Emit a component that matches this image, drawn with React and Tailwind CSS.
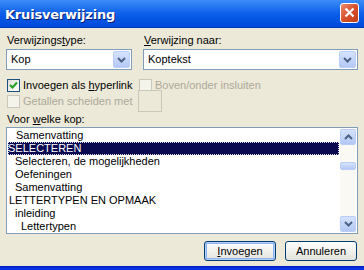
import React from "react";

const Chevron = ({ up }) => (
  <svg width="9" height="6" viewBox="0 0 9 6" className={up ? "rotate-180" : ""}>
    <path d="M1 1 L4.5 4.5 L8 1" fill="none" stroke="#4D6185" strokeWidth="2" />
  </svg>
);

const DropButton = () => (
  <div className="flex h-[17px] w-[17px] items-center justify-center rounded-[2px] border border-[#B9CDF6] bg-gradient-to-b from-[#D6E3FE] to-[#B4C8F5]">
    <Chevron />
  </div>
);

const Combo = ({ value, className }) => (
  <div className={"flex h-[21px] items-center justify-between border border-[#7F9DB9] bg-white pl-[4px] pr-[1px] " + className}>
    <span>{value}</span>
    <DropButton />
  </div>
);

const Check = ({ checked, disabled }) => (
  <div
    className={
      "flex h-[13px] w-[13px] shrink-0 items-center justify-center border " +
      (disabled ? "border-[#CAC8BB] bg-[#F5F4EA]" : "border-[#1C5180] bg-gradient-to-br from-[#DCDCD7] to-white")
    }
  >
    {checked && (
      <svg width="9" height="9" viewBox="0 0 9 9">
        <path d="M1 4 L3.5 6.5 L8 1.5" fill="none" stroke="#21A121" strokeWidth="2" />
      </svg>
    )}
  </div>
);

const Button = ({ children, focused }) => (
  <div
    className={
      "flex h-[20px] w-[72px] items-center justify-center rounded-[3px] border border-[#003C74] bg-gradient-to-b from-white to-[#E3E3DB] " +
      (focused ? "shadow-[inset_0_0_0_1px_#B5CDF5,inset_0_0_0_2px_#8CB4F2]" : "")
    }
  >
    {children}
  </div>
);

const items = [
  { text: "Samenvatting", pl: "pl-[8px]" },
  { text: "SELECTEREN", pl: "pl-[0px]", sel: true },
  { text: "Selecteren, de mogelijkheden", pl: "pl-[7px]" },
  { text: "Oefeningen", pl: "pl-[7px]" },
  { text: "Samenvatting", pl: "pl-[7px]" },
  { text: "LETTERTYPEN EN OPMAAK", pl: "pl-[1px]" },
  { text: "inleiding", pl: "pl-[7px]" },
  { text: "Lettertypen", pl: "pl-[13px]" },
];

export default function App() {
  return (
    <div className="flex h-[270px] w-[364px] flex-col overflow-hidden bg-[#ECE9D8] font-['Liberation_Sans',sans-serif] text-[11px] leading-[13px] text-black">
      {/* title bar */}
      <div className="flex h-[28px] shrink-0 items-center justify-between bg-gradient-to-b from-[#3C8CF8] via-[#0A5EE8] to-[#0048DA] pl-[5px] pr-[5px] shadow-[inset_0_-1px_0_#0036B8]">
        <span className="font-['DejaVu_Sans',sans-serif] text-[13px] font-bold tracking-[-0.2px] text-white [text-shadow:1px_1px_0_#0A1E72]">
          Kruisverwijzing
        </span>
        <div className="mb-[3px] flex h-[20px] w-[19px] items-center justify-center rounded-[3px] border border-white bg-gradient-to-br from-[#E88A6C] via-[#D8502C] to-[#C13F1C]">
          <svg width="11" height="11" viewBox="0 0 11 11">
            <path d="M1.5 1.5 L9.5 9.5 M9.5 1.5 L1.5 9.5" stroke="white" strokeWidth="2.2" />
          </svg>
        </div>
      </div>

      {/* body */}
      <div className="flex flex-1 flex-col px-[6px] pt-[6px]">
        <div className="flex gap-[1px]">
          <div className="flex w-[131px] flex-col">
            <span className="pl-[1px]">
              Verwijzings<u>t</u>ype:
            </span>
            <Combo value="Kop" className="mt-[2px] w-[126px]" />
          </div>
          <div className="ml-[5px] flex flex-1 flex-col">
            <span className="pl-[1px]">
              <u>V</u>erwijzing naar:
            </span>
            <Combo value="Koptekst" className="mt-[2px]" />
          </div>
        </div>

        <div className="mt-[9px] flex">
          <div className="flex w-[132px] items-center gap-[3px] pl-[1px]">
            <Check checked />
            <span>
              Invoegen als <u>h</u>yperlink
            </span>
          </div>
          <div className="flex items-center gap-[3px] pl-[1px] text-[#ACA899]">
            <Check disabled />
            <span>Boven/onder insluiten</span>
          </div>
        </div>

        <div className="mt-[-2px] flex items-center">
          <div className="flex w-[132px] items-center gap-[3px] pl-[1px] text-[#ACA899]">
            <Check disabled />
            <span>Getallen scheiden met</span>
          </div>
          <div className="h-[22px] w-[24px] border border-[#C9C7BA] bg-[#ECE9D8]" />
        </div>

        <span className="mt-[1px] pl-[1px]">
          Voor <u>w</u>elke kop:
        </span>

        {/* list box */}
        <div className="mt-[1px] flex h-[107px] border border-[#7F9DB9] bg-white">
          <div className="flex flex-1 flex-col pl-[1px] pt-[1px]">
            {items.map((it, i) => (
              <div
                key={i}
                className={
                  "h-[13px] whitespace-nowrap " +
                  it.pl +
                  (it.sel ? " mr-[1px] bg-[#0A0A50] text-white outline-1 outline-dotted outline-offset-[-1px] outline-[#D8D8E8]" : "")
                }
              >
                {it.text}
              </div>
            ))}
          </div>
          <div className="my-[1px] mr-[1px] flex w-[16px] flex-col bg-[#FAF9F4]">
            <div className="flex h-[16px] items-center justify-center rounded-[2px] border border-[#B9CDF6] bg-gradient-to-b from-[#D6E3FE] to-[#B4C8F5]">
              <Chevron up />
            </div>
            <div className="mt-[17px] h-[8px] rounded-[2px] border border-[#B9CDF6] bg-gradient-to-b from-[#D6E3FE] to-[#B4C8F5]" />
            <div className="flex-1" />
            <div className="flex h-[16px] items-center justify-center rounded-[2px] border border-[#B9CDF6] bg-gradient-to-b from-[#D6E3FE] to-[#B4C8F5]">
              <Chevron />
            </div>
          </div>
        </div>

        <div className="mt-[7px] flex justify-end gap-[9px] pr-[1px]">
          <Button focused>
            <span>
              <u>I</u>nvoegen
            </span>
          </Button>
          <Button>Annuleren</Button>
        </div>
      </div>

      {/* bottom frame */}
      <div className="h-[4px] shrink-0 border-t border-[#0019CF] bg-[#0831D9]" />
    </div>
  );
}
